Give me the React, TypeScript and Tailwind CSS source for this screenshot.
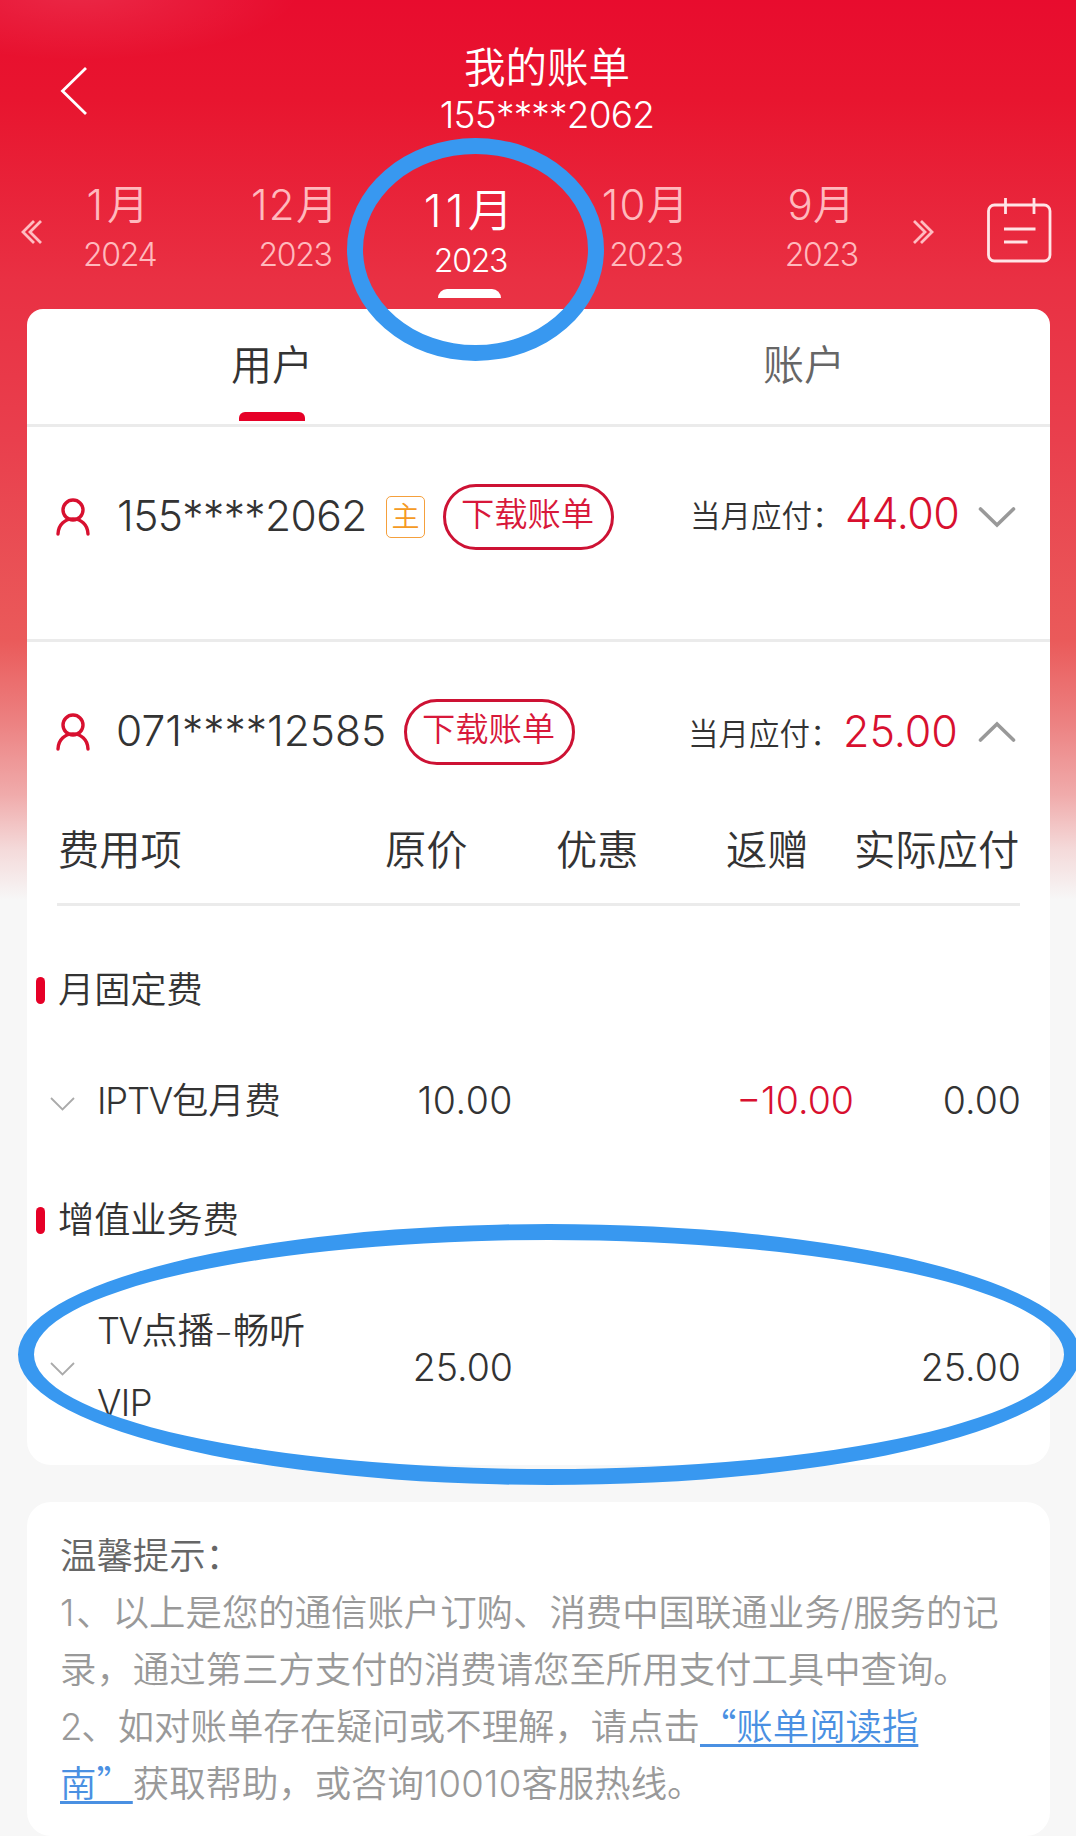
import React from "react";

const months = [
  { month: "1月", year: "2024", spacing: "tracking-[4px]" },
  { month: "12月", year: "2023", spacing: "tracking-[1.300px]" },
  { month: "11月", year: "2023", spacing: "tracking-[4px]", active: true },
  { month: "10月", year: "2023", spacing: "tracking-[1.300px]" },
  { month: "9月", year: "2023", spacing: "tracking-[0px]" },
];

function Chevron({ up = false }: { up?: boolean }) {
  return (
    <svg width="38" height="22" viewBox="0 0 38 22" fill="none" stroke="#999" strokeWidth="3.6" strokeLinecap="round">
      {up ? <path d="M2.5 19 L19 3 L35.5 19" /> : <path d="M2.5 3 L19 19 L35.5 3" />}
    </svg>
  );
}

function SmallChevron() {
  return (
    <svg className="ml-[23px] mt-[6px] shrink-0" width="25" height="14" viewBox="0 0 25 14" fill="none" stroke="#aaa" strokeWidth="1.8">
      <path d="M1 1 L12.5 12.5 L24 1" />
    </svg>
  );
}

function UserIcon() {
  return (
    <svg className="shrink-0" width="34" height="38" viewBox="0 0 34 38" fill="none" stroke="#d8102f" strokeWidth="3.4" strokeLinecap="round">
      <circle cx="17" cy="12" r="10" />
      <path d="M2 36 C2.500 15.800 31.500 15.800 32 36" />
    </svg>
  );
}

function DoubleAngle({ flip = false }: { flip?: boolean }) {
  return (
    <svg className={flip ? "rotate-180" : ""} width="22" height="24" viewBox="0 0 22 24" fill="none" stroke="#ffbcc1" strokeWidth="2.8">
      <path d="M13 1 L2 12 L13 23 M20 1 L9 12 L20 23" />
    </svg>
  );
}

function DownloadButton() {
  return (
    <button className="h-[66px] w-[171px] shrink-0 whitespace-nowrap rounded-full border-[3px] border-[#cd1234] pb-[5px] pr-[2px] text-[33.300px] leading-none text-[#d8183a]">
      下载账单
    </button>
  );
}

function SectionTitle({ children }: { children: string }) {
  return (
    <div className="flex h-[48px] items-center">
      <i className="ml-[9px] h-[27px] w-[9px] rounded-full bg-[#e60027]" />
      <h2 className="ml-[13px] mt-[1px] text-[36.200px] leading-none font-[350]">{children}</h2>
    </div>
  );
}

function GuideLink({ children }: { children: string }) {
  return (
    <a
      className="text-[#4a90e2] leading-none underline decoration-[3px] underline-offset-[4px] [text-decoration-skip-ink:none]"
      style={{ fontFamily: '"Noto Sans CJK SC", sans-serif' }}
    >
      {children}
    </a>
  );
}

export default function App() {
  return (
    <div
      className="relative h-[1836px] w-[1076px] overflow-hidden bg-[linear-gradient(180deg,#e80c2e_0px,#e8152f_100px,#e93043_280px,#e93f4d_440px,#ea5a5a_640px,#ec8080_720px,#f0abab_795px,#f4dada_850px,#f7f7f7_900px)] font-[350] text-[#333]"
      style={{ fontFamily: 'Inter, "Noto Sans CJK SC", sans-serif' }}
    >
      <div className="bg-[radial-gradient(ellipse_220px_70px_at_80px_-10px,rgba(255,255,255,0.12),rgba(255,255,255,0.06)_50%,transparent)]">
        <header className="flex h-[145px]">
          <div className="w-[347px] pl-[60px] pt-[67px]">
            <svg width="28" height="48" viewBox="0 0 28 48" fill="none" stroke="#fff" strokeWidth="2.800">
              <path d="M26 1 L2.500 24 L26 47" />
            </svg>
          </div>
          <div className="flex w-[400px] flex-col items-center pt-[46px] text-white">
            <h1 className="text-[41.500px] leading-[44px] font-[350]">我的账单</h1>
            <p className="mt-[-1px] text-[37px] leading-[52px] tracking-[-0.800px]">155****2062</p>
          </div>
        </header>

        <nav className="flex h-[164px]">
          <div className="w-[32px] pl-[21px] pt-[75px]">
            <DoubleAngle />
          </div>
          {months.map((m) =>
            m.active ? (
              <div key={m.month} className="flex w-[175.400px] flex-col items-center pt-[42px] text-white">
                <span className={`text-[45.500px] leading-[48px] ${m.spacing}`}>{m.month}</span>
                <span className="mt-[6px] text-[32px] leading-[40px] tracking-[-1.300px]">{m.year}</span>
                <i className="mt-[8px] mr-[2px] h-[9px] w-[63px] rounded-t-[9px] bg-white" />
              </div>
            ) : (
              <div key={m.month} className="flex w-[175.400px] flex-col items-center pt-[38px] text-[#ffb9bd]">
                <span className={`text-[42px] leading-[44px] ${m.spacing}`}>{m.month}</span>
                <span className="mt-[8px] text-[32px] leading-[40px] tracking-[-1.300px]">{m.year}</span>
              </div>
            ),
          )}
          <div className="pl-[3px] pt-[75px]">
            <DoubleAngle flip />
          </div>
          <svg className="ml-[53px] mt-[52px]" width="66" height="66" viewBox="0 0 66 66" fill="none" stroke="#ffe4e6" strokeWidth="2.800">
            <rect x="1.500" y="8" width="61.500" height="56" rx="6" />
            <path d="M18.500 1 V17 M47 1 V17 M17 32 H48.500 M17 45 H40.500" />
          </svg>
        </nav>
      </div>

      <main className="ml-[27px] h-[1156px] w-[1023px] rounded-b-[24px] rounded-t-[16px] bg-white">
        <div className="flex h-[118px] border-b-[3px] border-[#ebebeb] text-[41px]">
          <div className="flex w-[490px] flex-col items-center pt-[34px]">
            <span className="leading-[44px]">用户</span>
            <i className="mt-[25px] h-[9px] w-[66px] rounded-t-[6px] bg-[#e60027]" />
          </div>
          <div className="w-[533px] pl-[41px] pt-[34px] text-center leading-[44px] text-[#666]">账户</div>
        </div>

        <section className="flex h-[215px] border-b-[3px] border-[#ebebeb]">
          <div className="flex h-[180px] w-full items-center pl-[29px]">
            <UserIcon />
            <span className="ml-[27px] w-[249px] pb-[2px] text-[42.500px] leading-none tracking-[-0.600px]">155****2062</span>
            <span className="ml-[20px] flex h-[42px] w-[39px] items-center justify-center rounded-[5px] border border-[#f5a03c] text-[28px] leading-none text-[#f59a23]">
              主
            </span>
            <div className="ml-[18px]">
              <DownloadButton />
            </div>
            <span className="ml-[76px] w-[155px] whitespace-nowrap pb-[2px] text-[30.500px] leading-none">当月应付：</span>
            <span className="w-[113px] whitespace-nowrap pb-[8px] text-[43px] leading-none tracking-[-0.500px] text-[#d8102f]">44.00</span>
            <div className="ml-[20px]">
              <Chevron />
            </div>
          </div>
        </section>

        <section>
          <div className="flex h-[180px] items-center pl-[29px]">
            <UserIcon />
            <span className="ml-[26px] w-[270px] pb-[2px] text-[42.500px] leading-none">071****12585</span>
            <div className="ml-[18px]">
              <DownloadButton />
            </div>
            <span className="ml-[113px] w-[155px] whitespace-nowrap pt-[4px] text-[30.500px] leading-none">当月应付：</span>
            <span className="w-[113px] whitespace-nowrap pb-[2px] text-[43px] leading-none text-[#d8102f]">25.00</span>
            <div className="ml-[22px]">
              <Chevron up />
            </div>
          </div>

          <div className="ml-[30px] flex h-[84px] w-[963px] border-b-[3px] border-[#ebebeb] text-[41.300px] leading-[56px]">
            <span className="ml-[1px] w-[327px]">费用项</span>
            <span className="w-[171px]">原价</span>
            <span className="w-[170px]">优惠</span>
            <span className="w-[128px]">返赠</span>
            <span className="whitespace-nowrap">实际应付</span>
          </div>

          <div className="mt-[60px]">
            <SectionTitle>月固定费</SectionTitle>
          </div>
          <div className="mt-[51px] flex h-[72px] items-center text-[36.300px] leading-[72px]">
            <SmallChevron />
            <span className="ml-[22px] w-[240px]">
              <span className="tracking-[-1.200px]">IPTV</span>包月费
            </span>
            <span className="w-[176px] text-right text-[37.500px] tracking-[0.500px]">10.00</span>
            <span className="w-[341px] text-right text-[37.500px] text-[#d8102f]">−10.00</span>
            <span className="w-[167px] text-right text-[37.500px]">0.00</span>
          </div>

          <div className="mt-[59px]">
            <SectionTitle>增值业务费</SectionTitle>
          </div>
          <div className="mt-[50px] flex h-[144px] items-center text-[36.200px] leading-[72px]">
            <SmallChevron />
            <span className="ml-[22px] w-[240px] pt-[2px]">
              <span className="tracking-[-1.400px]">TV</span>点播
              <span className="relative -top-[2px] text-[29px] leading-none">−</span>畅听
              <br />
              <span className="tracking-[-0.500px]">VIP</span>
            </span>
            <span className="w-[176px] pt-[3px] text-right text-[37.500px]">25.00</span>
            <span className="w-[508px] pt-[3px] text-right text-[37.500px]">25.00</span>
          </div>
        </section>
      </main>

      <footer className="ml-[27px] mt-[37px] h-[334px] w-[1023px] whitespace-nowrap rounded-[24px] bg-white pl-[33px] pt-[26px] text-[36.400px] leading-[57px] text-[#999]">
        <p className="h-[57px] text-[#666]">温馨提示：</p>
        <p className="h-[57px]">
          <span className="tracking-[2px]">1</span>、以上是您的通信账户订购、消费中国联通业务/服务的记
        </p>
        <p className="h-[57px]">录，通过第三方支付的消费请您至所用支付工具中查询。</p>
        <p className="h-[57px]">
          <span className="tracking-[-1px]">2</span>、如对账单存在疑问或不理解，请点击
          <GuideLink>“账单阅读指</GuideLink>
        </p>
        <p className="h-[57px]">
          <GuideLink>南”</GuideLink>
          获取帮助，或咨询<span className="tracking-[0.300px]">10010</span>客服热线。
        </p>
      </footer>

      {/* Hand-marked highlights over the selected month and the charged item */}
      <div className="absolute left-[347px] top-[138px] h-[223px] w-[257px] rounded-[50%] border-[16px] border-[#3898f0]" />
      <div className="absolute left-[18px] top-[1224px] h-[261px] w-[1062px] rounded-[50%] border-[16px] border-[#3898f0]" />
    </div>
  );
}
